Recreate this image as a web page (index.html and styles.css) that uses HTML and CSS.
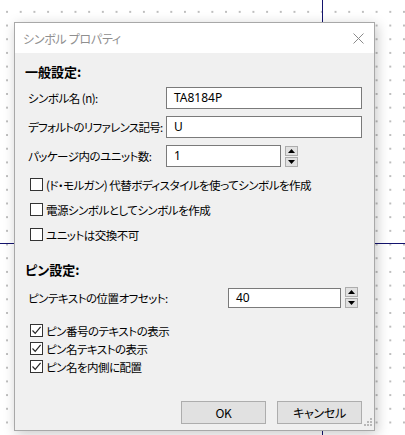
FILE: index.html
```html
<!DOCTYPE html>
<html lang="ja">
<head>
<meta charset="utf-8">
<link rel="stylesheet" href="styles.css">
</head>
<body>
<div class="canvas">
  <div class="wire wire-v"></div>
  <div class="wire wire-h"></div>
  <div class="dialog">
    <div class="titlebar">
      <span class="title">シンボル プロパティ</span>
      <svg class="close" width="11" height="11" viewBox="0 0 11 11"><path d="M0.5 0.5 L10.5 10.5 M10.5 0.5 L0.5 10.5" stroke="#8a8a8a" stroke-width="1" fill="none"/></svg>
    </div>
    <div class="body">
      <div class="section">一般設定:</div>
      <div class="row r1"><span class="label">シンボル名 (n):</span><div class="input wide">TA8184P</div></div>
      <div class="row r2"><span class="label tight">デフォルトのリファレンス記号:</span><div class="input wide">U</div></div>
      <div class="row r3"><span class="label">パッケージ内のユニット数:</span><div class="input spin1">1</div>
        <div class="spinner"><span class="sb"><svg width="7" height="4" viewBox="0 0 7 4"><path d="M0 4 L3.5 0 L7 4Z" fill="#000"/></svg></span><span class="sb"><svg width="7" height="4" viewBox="0 0 7 4"><path d="M0 0 L3.5 4 L7 0Z" fill="#000"/></svg></span></div>
      </div>
      <div class="check c1"><span class="box"></span>(ド・モルガン) 代替ボディスタイルを使ってシンボルを作成</div>
      <div class="check c2"><span class="box"></span>電源シンボルとしてシンボルを作成</div>
      <div class="check c2"><span class="box"></span>ユニットは交換不可</div>
      <div class="section s2">ピン設定:</div>
      <div class="row r4"><span class="label">ピンテキストの位置オフセット:</span><div class="input spin2">40</div>
        <div class="spinner"><span class="sb"><svg width="7" height="4" viewBox="0 0 7 4"><path d="M0 4 L3.5 0 L7 4Z" fill="#000"/></svg></span><span class="sb"><svg width="7" height="4" viewBox="0 0 7 4"><path d="M0 0 L3.5 4 L7 0Z" fill="#000"/></svg></span></div>
      </div>
      <div class="check c4"><span class="box on"><svg width="11" height="11" viewBox="0 0 11 11"><path d="M1.5 5.5 L4.2 8.3 L9.6 1.8" stroke="#222" stroke-width="1.2" fill="none"/></svg></span>ピン番号のテキストの表示</div>
      <div class="check c5"><span class="box on"><svg width="11" height="11" viewBox="0 0 11 11"><path d="M1.5 5.5 L4.2 8.3 L9.6 1.8" stroke="#222" stroke-width="1.2" fill="none"/></svg></span>ピン名テキストの表示</div>
      <div class="check c5"><span class="box on"><svg width="11" height="11" viewBox="0 0 11 11"><path d="M1.5 5.5 L4.2 8.3 L9.6 1.8" stroke="#222" stroke-width="1.2" fill="none"/></svg></span>ピン名を内側に配置</div>
      <div class="buttons">
        <button class="btn">OK</button>
        <button class="btn">キャンセル</button>
      </div>
      <svg class="grip" width="11" height="11" viewBox="0 0 11 11">
        <g fill="#b8b8b8"><rect x="8" y="0" width="2" height="2"/><rect x="5" y="3" width="2" height="2"/><rect x="8" y="3" width="2" height="2"/><rect x="2" y="6" width="2" height="2"/><rect x="5" y="6" width="2" height="2"/><rect x="8" y="6" width="2" height="2"/></g>
      </svg>
    </div>
  </div>
</div>
</body>
</html>
```
FILE: styles.css
```css
html, body {
  margin: 0;
  padding: 0;
}
body {
  width: 405px;
  height: 435px;
  overflow: hidden;
  font-family: "Noto Sans CJK JP", "Noto Sans", sans-serif;
  font-size: 11.5px;
  color: #000;
}
.canvas {
  position: relative;
  width: 405px;
  height: 435px;
  background-color: #ffffff;
  background-image: radial-gradient(circle, #a0a0a0 0.6px, transparent 0.9px);
  background-size: 13.7px 13.7px;
  background-position: 0.2px 5px;
}
.wire {
  position: absolute;
  background: #14146e;
}
.wire-v {
  left: 322px;
  top: 0;
  width: 1px;
  height: 435px;
}
.wire-h {
  left: 0;
  top: 243px;
  width: 405px;
  height: 1px;
}
.dialog {
  position: absolute;
  left: 14px;
  top: 22px;
  width: 361px;
  height: 409px;
  box-sizing: border-box;
  border: 1px solid #a8a8a8;
  background: #f0f0f0;
  box-shadow: 2px 3px 12px rgba(0, 0, 0, 0.22);
  display: flex;
  flex-direction: column;
}
.titlebar {
  height: 30px;
  flex: none;
  background: #ffffff;
  display: flex;
  align-items: center;
  justify-content: space-between;
  padding: 0 10px 0 8px;
}
.title {
  color: #8f8f8f;
  font-size: 12px;
  letter-spacing: -0.3px;
  font-feature-settings: "palt";
}
.body {
  position: relative;
  flex: 1;
  display: flex;
  flex-direction: column;
  padding: 0 12px 0 10px;
}
.section {
  font-weight: bold;
  font-size: 13px;
  height: 18px;
  line-height: 18px;
  margin-top: 10px;
  font-feature-settings: "palt";
}
.s2 {
  margin-top: 18px;
}
.row {
  display: flex;
  align-items: center;
  padding-left: 3px;
}
.r1 { margin-top: 6px; }
.r2 { margin-top: 7px; }
.r3 { margin-top: 7px; }
.r4 { margin-top: 8px; }
.label {
  width: 138px;
  flex: none;
  letter-spacing: -0.5px;
  font-feature-settings: "palt";
  white-space: nowrap;
}
.label.tight {
  letter-spacing: -0.7px;
}
.r4 .label {
  width: 200px;
}
.input {
  box-sizing: border-box;
  height: 22px;
  border: 1px solid #7a7a7a;
  background: #fff;
  line-height: 20px;
  padding-left: 7px;
  font-family: "Noto Sans", sans-serif;
  font-size: 12px;
}
.wide { width: 196px; }
.spin1 { width: 115px; }
.spin2 { width: 113px; height: 20px; line-height: 18px; }
.spinner {
  display: flex;
  flex-direction: column;
  gap: 1px;
  margin-left: 4px;
}
.sb {
  box-sizing: border-box;
  width: 13px;
  height: 10px;
  background: #e1e1e1;
  border: 1px solid #adadad;
  display: flex;
  align-items: center;
  justify-content: center;
}
.check {
  display: flex;
  align-items: center;
  height: 17px;
  padding-left: 5px;
  letter-spacing: -0.5px;
  font-feature-settings: "palt";
  white-space: nowrap;
}
.c1 { margin-top: 9px; }
.c2 { margin-top: 8px; }
.c4 { margin-top: 14px; }
.c5 { margin-top: 1px; }
.box {
  box-sizing: border-box;
  width: 13px;
  height: 13px;
  border: 1px solid #333;
  background: #fff;
  margin-right: 3px;
  flex: none;
  display: flex;
  align-items: center;
  justify-content: center;
}
.buttons {
  margin-top: auto;
  margin-bottom: 6px;
  display: flex;
  justify-content: flex-end;
  gap: 11px;
}
.btn {
  width: 85px;
  height: 23px;
  box-sizing: border-box;
  background: #e1e1e1;
  border: 1px solid #adadad;
  font-family: "Noto Sans CJK JP", sans-serif;
  font-size: 12px;
  color: #000;
  padding: 0;
  letter-spacing: -0.3px;
  font-feature-settings: "palt";
}
.grip {
  position: absolute;
  right: 1px;
  bottom: 1px;
}
```
